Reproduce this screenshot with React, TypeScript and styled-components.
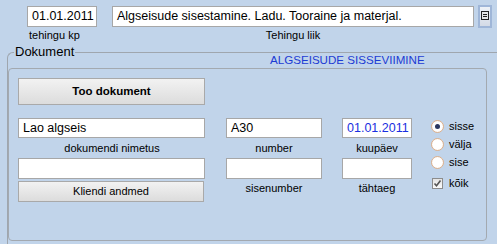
import React from 'react';
import styled, { createGlobalStyle } from 'styled-components';

const GlobalStyle = createGlobalStyle`
  html, body {
    margin: 0;
    padding: 0;
    background: #c1d4ea;
    overflow: hidden;
  }
  * {
    box-sizing: border-box;
  }
`;

const Screen = styled.div`
  width: 497px;
  height: 244px;
  padding-top: 6px;
  overflow: hidden;
  background: #c1d4ea;
  font-family: 'Liberation Sans', Arial, sans-serif;
  color: #000;
`;

const TopRow = styled.div`
  display: flex;
  align-items: flex-start;
  padding-left: 27px;
  height: 37px;
`;

const Field = styled.div<{ $w: number; $ml?: number; $align?: string }>`
  display: flex;
  flex-direction: column;
  width: ${(p) => p.$w}px;
  margin-left: ${(p) => p.$ml || 0}px;
  text-align: ${(p) => p.$align || 'center'};
`;

const TextBox = styled.div<{ $h?: number; $blue?: boolean }>`
  height: ${(p) => p.$h || 20}px;
  line-height: ${(p) => (p.$h || 20) - 2}px;
  background: #fff;
  border: 1px solid #a7a7a7;
  padding: 0 4px;
  font-size: 12.5px;
  text-align: left;
  white-space: nowrap;
  overflow: hidden;
  color: ${(p) => (p.$blue ? '#1a2fe0' : '#000')};
`;

const Caption = styled.div<{ $h?: number; $pl?: number }>`
  height: ${(p) => p.$h || 16}px;
  line-height: ${(p) => p.$h || 16}px;
  font-size: 11px;
  padding-left: ${(p) => p.$pl || 0}px;
  white-space: nowrap;
`;

const ListButton = styled.div`
  width: 14px;
  height: 23px;
  margin-left: 4px;
  margin-top: -1px;
  border: 2px solid #9fb6d8;
  background: linear-gradient(#eef2f8, #d3dae6);
  display: flex;
  justify-content: center;
  padding-top: 4px;
`;

const Group = styled.div`
  position: relative;
  margin-top: 9px;
  margin-left: 7px;
  width: 520px;
  height: 220px;
  border-top: 1px solid #9fa6ae;
  border-left: 1px solid #9fa6ae;
  border-top-left-radius: 6px;
`;

const Legend = styled.span`
  position: absolute;
  top: -9px;
  left: 6px;
  padding: 0 1px;
  background: #c1d4ea;
  font-size: 13px;
  line-height: 16px;
`;

const Title = styled.div`
  padding-left: 262px;
  height: 14px;
  line-height: 14px;
  font-size: 11.6px;
  color: #1c3bd4;
  white-space: nowrap;
`;

const Panel = styled.div`
  margin-top: 1px;
  width: 479px;
  height: 173px;
  border: 1px solid #a3a9b0;
  border-radius: 4px;
  padding: 9px;
  display: flex;
`;

const LeftArea = styled.div`
  display: flex;
  flex-direction: column;
`;

const GrayButton = styled.div<{ $w: number; $h: number; $bold?: boolean; $mt?: number }>`
  width: ${(p) => p.$w}px;
  height: ${(p) => p.$h}px;
  margin-top: ${(p) => p.$mt || 0}px;
  line-height: ${(p) => p.$h - 2}px;
  border: 1px solid #a9a9a9;
  background: linear-gradient(#f2f2f2, #dcdcdc);
  text-align: center;
  font-size: ${(p) => (p.$bold ? 11.5 : 11)}px;
  font-weight: ${(p) => (p.$bold ? 'bold' : 'normal')};
`;

const Columns = styled.div`
  display: flex;
  gap: 20px;
  margin-top: 13px;
`;

const Choices = styled.div`
  display: flex;
  flex-direction: column;
  margin-left: 19px;
  padding-top: 39px;
`;

const Choice = styled.div<{ $mt?: number }>`
  display: flex;
  align-items: center;
  gap: 5px;
  height: 18px;
  margin-top: ${(p) => p.$mt || 0}px;
  font-size: 11px;
`;

const Radio = styled.span<{ $on?: boolean }>`
  width: 13px;
  height: 13px;
  border-radius: 50%;
  border: 1px solid #ddb08c;
  background: radial-gradient(circle, #ffffff 55%, #f6e9de 100%);
  display: flex;
  align-items: center;
  justify-content: center;
  &::after {
    content: '';
    display: ${(p) => (p.$on ? 'block' : 'none')};
    width: 5px;
    height: 5px;
    border-radius: 50%;
    background: #2a3760;
  }
`;

const Check = styled.span`
  width: 11px;
  height: 11px;
  margin-left: 1px;
  margin-right: 1px;
  border: 1px solid #8c8c8c;
  background: linear-gradient(#e4e4e4, #fafafa);
  display: flex;
`;

const App: React.FC = () => (
  <Screen>
    <GlobalStyle />
    <TopRow>
      <Field $w={70} $align='left'>
        <TextBox $h={21}>01.01.2011</TextBox>
        <Caption $pl={2}>tehingu kp</Caption>
      </Field>
      <Field $w={362} $ml={15}>
        <TextBox $h={21}>Algseisude sisestamine. Ladu. Tooraine ja materjal.</TextBox>
        <Caption>Tehingu liik</Caption>
      </Field>
      <ListButton>
        <svg width='8' height='9' viewBox='0 0 8 9'>
          <rect x='0.5' y='0.5' width='7' height='8' fill='#e6e6e6' stroke='#222' />
          <line x1='2' y1='3.5' x2='6' y2='3.5' stroke='#222' />
          <line x1='2' y1='5.5' x2='6' y2='5.5' stroke='#222' />
        </svg>
      </ListButton>
    </TopRow>
    <Group>
      <Legend>Dokument</Legend>
      <Title>ALGSEISUDE SISSEVIIMINE</Title>
      <Panel>
        <LeftArea>
          <GrayButton $w={187} $h={27} $bold>
            Too dokument
          </GrayButton>
          <Columns>
            <Field $w={188}>
              <TextBox style={{ width: 187 }}>Lao algseis</TextBox>
              <Caption $h={20}>dokumendi nimetus</Caption>
              <TextBox $h={21} style={{ width: 187 }} />
              <GrayButton $w={186} $h={21} $mt={2}>
                Kliendi andmed
              </GrayButton>
            </Field>
            <Field $w={96}>
              <TextBox>A30</TextBox>
              <Caption $h={20}>number</Caption>
              <TextBox $h={21} />
              <Caption $h={18}>sisenumber</Caption>
            </Field>
            <Field $w={70}>
              <TextBox $blue>01.01.2011</TextBox>
              <Caption $h={20}>kuupäev</Caption>
              <TextBox $h={21} />
              <Caption $h={18}>tähtaeg</Caption>
            </Field>
          </Columns>
        </LeftArea>
        <Choices>
          <Choice>
            <Radio $on />
            sisse
          </Choice>
          <Choice>
            <Radio />
            välja
          </Choice>
          <Choice>
            <Radio />
            sise
          </Choice>
          <Choice $mt={3}>
            <Check>
              <svg width='9' height='9' viewBox='0 0 9 9'>
                <path d='M1.5 4.5 L3.5 6.8 L7.5 1.5' fill='none' stroke='#555' strokeWidth='1.6' />
              </svg>
            </Check>
            kõik
          </Choice>
        </Choices>
      </Panel>
    </Group>
  </Screen>
);

export default App;
